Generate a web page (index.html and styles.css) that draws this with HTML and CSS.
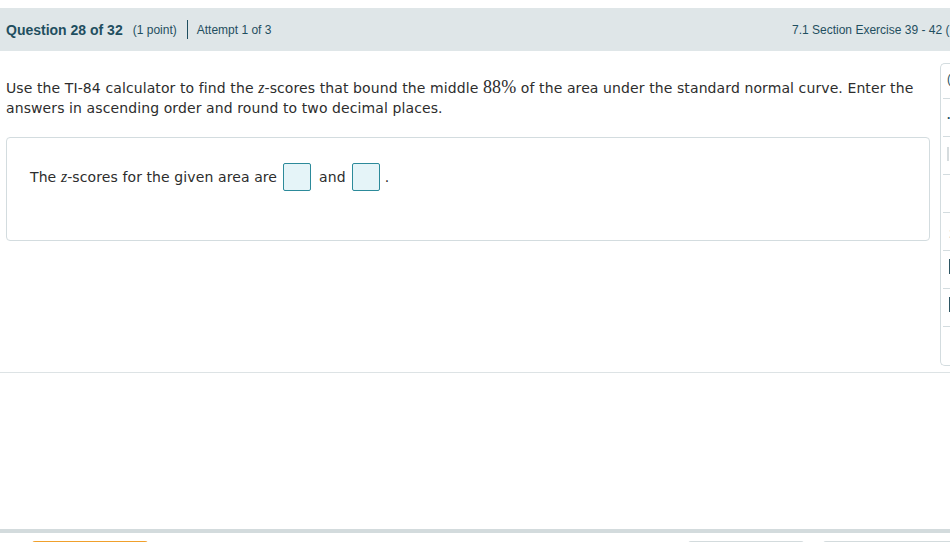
FILE: index.html
```html
<!DOCTYPE html>
<html>
<head>
<meta charset="utf-8">
<link rel="stylesheet" href="styles.css">
</head>
<body>
<div class="page">
  <div class="topgap"></div>
  <header class="qhead">
    <div class="qinfo">
      <span class="qnum">Question 28 of 32</span>
      <span class="qpts">(1 point)</span>
      <span class="sep"></span>
      <span class="attempt">Attempt 1 of 3</span>
    </div>
    <div class="section">7.1 Section Exercise 39 - 42 (</div>
  </header>
  <div class="body">
    <main class="main">
      <p class="prompt">Use the TI-84 calculator to find the <i class="mv">z</i>-scores that bound the middle <span class="mn">88%</span> of the area under the standard normal curve. Enter the answers in ascending order and round to two decimal places.</p>
      <div class="answer">
        <span>The <i class="mv">z</i>-scores for the given area are</span>
        <span class="box"></span>
        <span>and</span>
        <span class="box"></span>
        <span class="dot">.</span>
      </div>
    </main>
    <aside class="side">
      <div class="row first"><span class="g g-paren">(</span></div>
      <div class="row"><span class="g g-dot">.</span></div>
      <div class="row"><span class="g g-light"></span></div>
      <div class="row"></div>
      <div class="row"><span class="g g-two">2</span></div>
      <div class="row"><span class="g g-bar"></span></div>
      <div class="row"><span class="g g-bar"></span></div>
      <div class="row last"></div>
    </aside>
  </div>
  <div class="rule"></div>
  <div class="spacer"></div>
  <div class="band"></div>
  <div class="buttons">
    <div class="btn btn-orange"></div>
    <div class="btn-right">
      <div class="btn btn-grey"></div>
      <div class="btn btn-grey wide"></div>
    </div>
  </div>
</div>
</body>
</html>
```

FILE: styles.css
```css
html, body {
  margin: 0;
  padding: 0;
  background: #ffffff;
  overflow: hidden;
}
.page {
  width: 950px;
  height: 542px;
  overflow: hidden;
  font-family: "Liberation Sans", Arial, sans-serif;
}
.topgap { height: 8px; }
.qhead {
  height: 43px;
  background: #dfe6e8;
  display: flex;
  align-items: center;
  justify-content: space-between;
  padding-left: 6px;
  color: #1f4f60;
  white-space: nowrap;
  overflow: hidden;
}
.qinfo {
  display: flex;
  align-items: center;
}
.qnum {
  font-weight: bold;
  font-size: 14px;
}
.qpts {
  font-size: 12px;
  margin-left: 10px;
}
.sep {
  width: 1px;
  height: 19px;
  background: #1f4f60;
  margin: 0 9px 0 10px;
}
.attempt { font-size: 12px; }
.section {
  font-size: 12px;
  width: 158px;
  flex: none;
  overflow: hidden;
  white-space: nowrap;
}
.body {
  display: flex;
  align-items: flex-start;
  height: 321px;
}
.main {
  width: 924px;
  padding-left: 6px;
  flex: none;
}
.prompt {
  margin: 27px 0 0;
  font-family: "DejaVu Sans", Verdana, sans-serif;
  font-size: 14px;
  line-height: 20px;
  letter-spacing: 0.1px;
  color: #2d2d2d;
  width: 912px;
}
.mv {
  font-family: "Liberation Serif", "Times New Roman", serif;
  font-style: italic;
  font-size: 16px;
  line-height: 1;
}
.mn {
  font-family: "Liberation Serif", "Times New Roman", serif;
  font-size: 18px;
  line-height: 1;
}
.answer {
  margin-top: 19px;
  height: 104px;
  border: 1px solid #d3dcdf;
  border-radius: 4px;
  box-sizing: border-box;
  padding: 25px 0 0 23px;
  display: flex;
  align-items: flex-start;
  font-family: "DejaVu Sans", Verdana, sans-serif;
  font-size: 14px;
  letter-spacing: 0.1px;
  color: #2d2d2d;
  line-height: 28px;
}
.box {
  width: 28px;
  height: 28px;
  box-sizing: border-box;
  background: #e5f4f8;
  border: 1px solid #2c8a9a;
  border-radius: 2px;
  margin: 0 8px 0 6px;
}
.dot { margin-left: -3px; }
.side {
  margin-top: 12px;
  margin-left: 10px;
  width: 30px;
  flex: none;
  border: 1px solid #d3dcdf;
  border-right: none;
  border-radius: 5px 0 0 5px;
  box-sizing: border-box;
  padding-left: 2px;
}
.row {
  height: 38px;
  border-bottom: 1px solid #d3dcdf;
  box-sizing: border-box;
  display: flex;
  align-items: center;
  padding-left: 4px;
}
.row.first { height: 35px; }
.row.last { border-bottom: none; }
.g {
  font-size: 12px;
  color: #1f4f60;
}
.g-paren { margin-top: -4px; }
.g-dot { font-weight: bold; margin-top: -6px; }
.g-light {
  width: 2px;
  height: 14px;
  background: #d6dcde;
  margin-top: -4px;
}
.g-two { color: #b8c0c2; margin-top: 4px; padding-left: 2px; }
.g-bar {
  width: 2px;
  height: 15px;
  margin-left: 2px;
  margin-top: -6px;
  background: #2d5563;
}
.rule {
  height: 1px;
  background: #dde3e5;
}
.spacer { height: 156px; }
.band {
  height: 4px;
  background: #d3dbdd;
}
.buttons {
  margin-top: 8px;
  display: flex;
  justify-content: space-between;
  padding-left: 32px;
}
.btn {
  height: 10px;
  border-radius: 3px 3px 0 0;
  box-sizing: border-box;
}
.btn-orange {
  width: 116px;
  border-top: 2px solid #f0a02c;
}
.btn-right {
  display: flex;
  gap: 19px;
  margin-right: -10px;
}
.btn-grey {
  width: 116px;
  border-top: 2px solid #d3dbdd;
}
.btn-grey.wide { width: 137px; }
```
